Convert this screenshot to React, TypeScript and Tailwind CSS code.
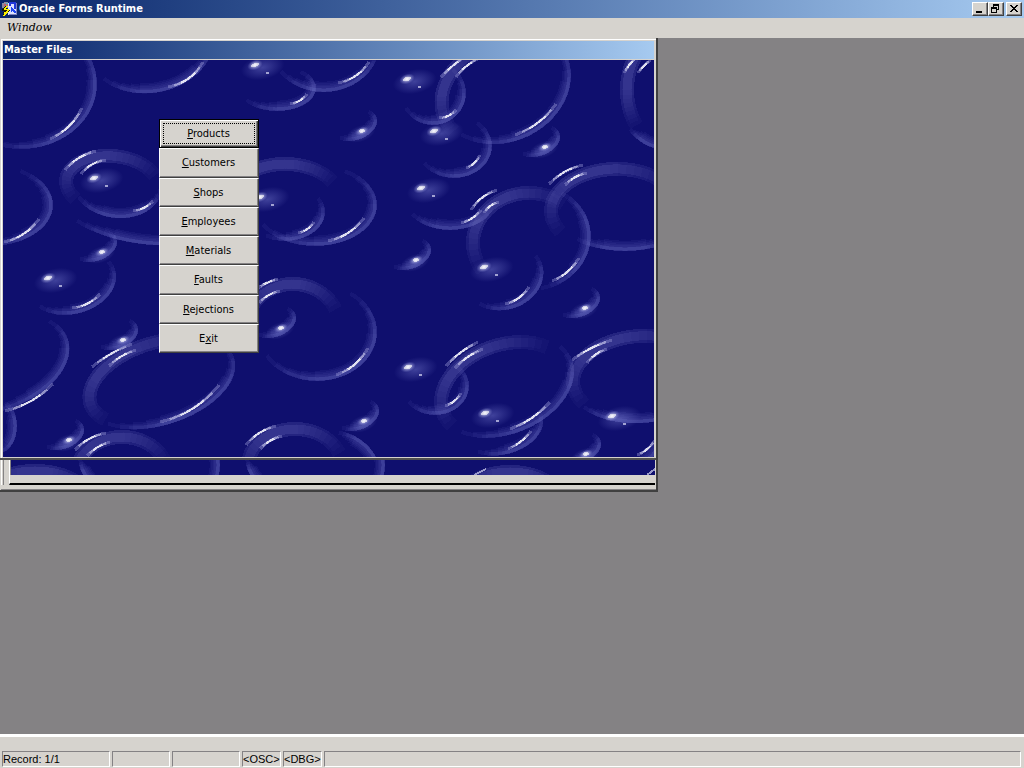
import { ReactNode } from "react";

type Arc = [cx: number, cy: number, rx: number, ry: number, rot: number, from: number, to: number];
type Streak = [x1: number, y1: number, x2: number, y2: number, bend: number];
type Point = [x: number, y: number];

// rims of the bubbles, angles in degrees, clockwise from the right
const arcs: Arc[] = [
  [21, 84, 76, 65, 0, -50, 115],
  [150, 42, 65, 51, -10, 10, 145],
  [277, 88, 39, 23, 0, -50, 145],
  [325, 45, 55, 47, -5, 10, 150],
  [117, 183, 46, 35, 8, 0, 145],
  [-10, 205, 63, 41, 0, -60, 100],
  [145, 190, 100, 54, 8, 40, 130],
  [315, 205, 62, 41, 0, -60, 150],
  [285, 212, 40, 29, 0, -30, 120],
  [72, 282, 45, 32, -15, -20, 150],
  [-8, 364, 80, 48, -18, -30, 110],
  [160, 382, 78, 43, -18, -20, 145],
  [-3, 426, 20, 28, 0, -60, 90],
  [317, 332, 60, 49, 0, -55, 150],
  [433, 93, 33, 32, 0, -50, 150],
  [503, 84, 70, 58, -25, -20, 150],
  [454, 146, 38, 32, 0, -50, 145],
  [450, 200, 45, 30, 0, 10, 150],
  [532, 238, 59, 53, -10, -50, 90],
  [625, 207, 76, 44, 0, 50, 130],
  [667, 95, 50, 55, 0, 85, 140],
  [503, 276, 41, 34, -15, -20, 140],
  [505, 386, 72, 48, -22, -20, 145],
  [435, 386, 34, 29, 0, -50, 145],
  [500, 425, 44, 30, -12, -10, 130],
  [642, 376, 76, 47, -5, 60, 145],
  [614, 432, 50, 40, 0, 5, 70],
  [330, 480, 52, 50, 0, -80, -10],
];

// lit upper left sides, drawn thicker than the rest of the rim
const wideArcs: Arc[] = [
  [112, 184, 53, 35, 5, 140, 335],
  [285, 200, 62, 43, 0, 190, 330],
  [158, 382, 78, 46, -18, 150, 320],
  [122, 475, 53, 45, 0, 155, 340],
  [295, 466, 54, 44, 0, 155, 340],
  [293, 328, 54, 51, 0, 180, 335],
  [505, 94, 72, 58, -20, 160, 275],
  [528, 242, 62, 56, -5, 150, 315],
  [614, 209, 70, 47, -3, 150, 335],
  [667, 90, 47, 62, 0, 140, 250],
  [505, 390, 73, 52, -20, 160, 325],
  [640, 378, 74, 49, -5, 150, 320],
];

const upperStreaks: Streak[] = [
  [65, 170, 96, 151, 3],
  [81, 174, 106, 160, 3],
  [92, 367, 132, 344, 2],
  [109, 366, 136, 350, 2],
  [75, 450, 106, 433, 3],
  [87, 456, 110, 442, 2],
  [246, 445, 276, 426, 3],
  [260, 449, 282, 436, 2],
  [258, 288, 278, 279, 1],
  [259, 303, 280, 291, 2],
  [441, 77, 466, 56, 1],
  [456, 77, 480, 58, 2],
  [471, 210, 497, 190, 3],
  [484, 213, 499, 202, 2],
  [549, 184, 583, 165, 3],
  [565, 185, 587, 173, 2],
  [624, 73, 637, 57, 1],
  [638, 73, 651, 60, 1],
  [446, 366, 478, 342, 2],
  [455, 368, 483, 349, 2],
  [572, 360, 612, 340, 2],
  [587, 363, 607, 349, 2],
];

const lowerStreaks: Streak[] = [
  [50, 139, 82, 108, -4],
  [168, 87, 203, 62, -5],
  [290, 104, 307, 94, -2],
  [338, 83, 369, 62, -4],
  [133, 211, 153, 201, -2],
  [4, 242, 39, 219, -4],
  [328, 241, 364, 218, -4],
  [298, 233, 314, 222, -2],
  [72, 308, 100, 294, -3],
  [5, 411, 53, 384, -4],
  [160, 422, 219, 385, -6],
  [336, 375, 368, 348, -4],
  [439, 118, 456, 110, -2],
  [515, 135, 556, 104, -4],
  [466, 168, 480, 155, -2],
  [461, 223, 481, 210, -2],
  [552, 281, 579, 258, -3],
  [505, 304, 529, 287, -3],
  [510, 429, 550, 402, -3],
  [445, 406, 461, 393, -2],
  [508, 449, 531, 431, -2],
  [637, 455, 655, 440, -2],
];

const glints: Point[] = [
  [255, 65], [94, 178], [260, 197], [48, 278], [407, 79], [434, 131],
  [421, 188], [484, 267], [408, 367], [485, 413], [612, 416],
];

const droplets: Point[] = [
  [102, 252], [362, 131], [545, 147], [416, 260], [585, 308], [364, 421],
  [281, 328], [123, 340], [69, 440], [586, 454],
];

const arcPath = ([cx, cy, rx, ry, rot, from, to]: Arc, inset: number, trim: number) => {
  const r = (rot * Math.PI) / 180;
  const steps = 28;
  const start = from + (to - from) * trim;
  const end = to - (to - from) * trim;
  let d = "";
  for (let i = 0; i <= steps; i++) {
    const t = ((start + ((end - start) * i) / steps) * Math.PI) / 180;
    const x = (rx - inset) * Math.cos(t);
    const y = (ry - inset) * Math.sin(t);
    const px = cx + x * Math.cos(r) - y * Math.sin(r);
    const py = cy + x * Math.sin(r) + y * Math.cos(r);
    d += `${i === 0 ? "M" : "L"}${px.toFixed(1)} ${py.toFixed(1)}`;
  }
  return d;
};

const streakPath = ([x1, y1, x2, y2, bend]: Streak, trim: number) => {
  const len = Math.hypot(x2 - x1, y2 - y1);
  const nx = ((y2 - y1) / len) * bend * 2;
  const ny = (-(x2 - x1) / len) * bend * 2;
  const at = (t: number) => {
    const bow = 2 * t * (1 - t);
    return `${(x1 + (x2 - x1) * t + nx * bow).toFixed(1)} ${(y1 + (y2 - y1) * t + ny * bow).toFixed(1)}`;
  };
  const points = [0, 0.17, 0.33, 0.5, 0.67, 0.83, 1].map((t) => at(trim + t * (1 - trim * 2)));
  return `M${points.join("L")}`;
};

const Rim = ({ arc }: { arc: Arc }) => (
  <g fill="none" stroke="#7074c8">
    {[0, 1, 2, 3, 4].map((k) => (
      <path key={k} d={arcPath(arc, 2 + k * 0.8, k * 0.07)} strokeWidth={4 + k * 1.6} opacity={0.09} />
    ))}
    <path d={arcPath(arc, 2, 0.12)} strokeWidth={3} opacity={0.11} />
    <path d={arcPath(arc, 2, 0.25)} strokeWidth={3} opacity={0.11} />
  </g>
);

const WideRim = ({ arc }: { arc: Arc }) => (
  <g fill="none" stroke="#7074c8">
    {[0, 1, 2, 3, 4, 5, 6, 7, 8, 9].map((k) => (
      <path key={k} d={arcPath(arc, 7, k * 0.04)} strokeWidth={k % 2 ? 9 : 14} opacity={0.05} />
    ))}
  </g>
);

const BubbleShapes = () => (
  <g>
    {arcs.map((arc, i) => (
      <Rim key={i} arc={arc} />
    ))}
    {wideArcs.map((arc, i) => (
      <WideRim key={i} arc={arc} />
    ))}
    {[...upperStreaks, ...lowerStreaks].map((s, i) => (
      <g key={i} fill="none">
        <path d={streakPath(s, 0)} stroke="#9a9cd8" strokeWidth={3} opacity={0.4} />
        <path d={streakPath(s, 0.14)} stroke="#d0d0ee" strokeWidth={2} opacity={0.55} />
        <path d={streakPath(s, 0.3)} stroke="#ffffff" strokeWidth={2} opacity={0.7} />
      </g>
    ))}
    {glints.map(([x, y]) => (
      <g key={`${x}-${y}`}>
        <ellipse cx={x + 7} cy={y + 4} rx={22} ry={12} fill="url(#glow)" transform={`rotate(-12 ${x} ${y})`} />
        <ellipse cx={x} cy={y} rx={8} ry={5} fill="url(#spark)" transform={`rotate(-20 ${x} ${y})`} />
        <ellipse cx={x} cy={y} rx={4} ry={2} fill="#fff" opacity={0.6} transform={`rotate(-20 ${x} ${y})`} />
        <rect x={x + 11} y={y + 7} width={3} height={2} fill="#d8d8f4" opacity={0.7} />
      </g>
    ))}
    {droplets.map(([x, y]) => (
      <g key={`${x}-${y}`}>
        <Rim arc={[x - 7, y - 6, 23, 15, -20, -35, 150]} />
        <ellipse cx={x - 2} cy={y + 2} rx={15} ry={8} fill="url(#glow)" transform={`rotate(-20 ${x} ${y})`} />
        <ellipse cx={x} cy={y} rx={7} ry={4} fill="url(#spark)" transform={`rotate(-20 ${x} ${y})`} />
        <ellipse cx={x} cy={y} rx={3} ry={2} fill="#fff" opacity={0.6} transform={`rotate(-20 ${x} ${y})`} />
      </g>
    ))}
  </g>
);

const Bubbles = () => (
  <svg
    aria-hidden="true"
    className="absolute inset-0 h-full w-full"
    viewBox="3 60 651 397"
    preserveAspectRatio="xMinYMin slice"
    shapeRendering="crispEdges"
  >
    <defs>
      <radialGradient id="glow">
        <stop offset="0" stopColor="#7074c8" stopOpacity="0.5" />
        <stop offset="1" stopColor="#7074c8" stopOpacity="0" />
      </radialGradient>
      <radialGradient id="spark">
        <stop offset="0" stopColor="#ffffff" />
        <stop offset="1" stopColor="#8084d8" stopOpacity="0" />
      </radialGradient>
    </defs>
    <BubbleShapes />
  </svg>
);

const BubbleStrip = () => (
  <svg
    aria-hidden="true"
    className="block h-full w-full"
    viewBox="11 460 644 15"
    preserveAspectRatio="xMinYMin slice"
    shapeRendering="crispEdges"
  >
    <WideRim arc={[35, 500, 60, 36, 0, 200, 340]} />
    <Rim arc={[165, 465, 55, 50, 0, -40, 40]} />
    <Rim arc={[330, 465, 55, 50, 0, -40, 40]} />
    <WideRim arc={[510, 505, 60, 40, 0, 200, 340]} />
    <Rim arc={[98, 455, 20, 30, 0, 90, 170]} />
    <Rim arc={[265, 455, 20, 30, 0, 90, 170]} />
    <path d="M474 475L486 469M647 475L655 469" fill="none" stroke="#d0d0ee" strokeWidth={2} opacity={0.7} />
  </svg>
);

const FormsIcon = () => (
  <svg aria-hidden="true" width="16" height="16" viewBox="0 0 16 16" shapeRendering="crispEdges">
    <path d="M0 2h2v-1h4v1h2v5h-8z" fill="#8c88a0" />
    <path d="M2 3h2v2h-2zM5 3h1v2h-1z" fill="#c86060" />
    <path d="M4 2h2v1h-2z" fill="#50b0c0" />
    <path d="M6 2h9v12h-9z" fill="#dce2ff" />
    <path d="M7 1h7v2h-7zM12 3h2v5h-2zM7 3h2v2h-2z" fill="#2038d8" />
    <path d="M9 6h1v5h-1zM10 7h1v1h1v1h1v1h1v2h-2v-1h-1v-1h-1z" fill="#2048f0" />
    <path d="M14 2h1v12h-1zM7 13h8v1h-8z" fill="#7c84c0" />
    <path d="M3 5h3v1h-1v2h2v1h1v1h-1v1h-1v1h-1v1h-1v1h-1v1h-2v-2h1v-1h-1v-1h1v-1h-2v-2h1v-1h1v-1h1z" fill="#181800" />
    <path d="M4 5h2v1h-2zM3 6h2v1h-2zM2 7h2v1h-2zM2 8h5v1h-5zM5 9h2v1h-2zM4 10h2v1h-2zM2 11h4v1h-4zM2 12h3v1h-3zM2 13h2v1h-2zM1 14h2v1h-2z" fill="#f8f000" />
  </svg>
);

const CaptionButton = ({ label, children }: { label: string; children: ReactNode }) => (
  <button
    type="button"
    aria-label={label}
    className="h-[14px] w-4 border border-t-white border-l-white border-r-[#404040] border-b-[#404040] bg-[#d6d3ce] shadow-[inset_-1px_-1px_0_#848284]"
  >
    <svg aria-hidden="true" width="14" height="12" viewBox="0 0 14 12" shapeRendering="crispEdges">
      {children}
    </svg>
  </button>
);

const menuItems: { before: string; key: string; after: string }[] = [
  { before: "", key: "P", after: "roducts" },
  { before: "", key: "C", after: "ustomers" },
  { before: "", key: "S", after: "hops" },
  { before: "", key: "E", after: "mployees" },
  { before: "", key: "M", after: "aterials" },
  { before: "", key: "F", after: "aults" },
  { before: "", key: "R", after: "ejections" },
  { before: "E", key: "x", after: "it" },
];

const MenuButton = ({ item, selected }: { item: (typeof menuItems)[number]; selected: boolean }) => (
  <button
    type="button"
    className={
      selected
        ? "relative flex-1 border border-black bg-[#d6d3ce] pt-px pr-px text-[11px] leading-3 shadow-[inset_1px_1px_0_#fff,inset_-1px_-1px_0_#404040,inset_-2px_-2px_0_#848284]"
        : "relative flex-1 border border-t-white border-l-white border-r-[#404040] border-b-[#404040] bg-[#d6d3ce] pt-px pr-px text-[11px] leading-3 shadow-[inset_-1px_-1px_0_#848284]"
    }
  >
    {selected && <span className="absolute inset-[3px] border border-dotted border-black" />}
    {item.before}
    <span className="underline underline-offset-1">{item.key}</span>
    {item.after}
  </button>
);

const StatusField = ({ className, children }: { className: string; children?: ReactNode }) => (
  <div
    className={`h-4 border border-t-[#848284] border-l-[#848284] border-r-white border-b-white text-[11px] leading-[14px] whitespace-nowrap ${className}`}
  >
    {children}
  </div>
);

const App = () => {
  return (
    <div className="flex min-h-screen flex-col bg-[#d6d3ce] font-['DejaVu_Sans_Condensed','DejaVu_Sans',sans-serif] text-black">
      <header className="flex h-[18px] items-center bg-linear-to-r from-[#0a246a] to-[#a6caf0] px-[2px]">
        <FormsIcon />
        <h1 className="ml-px flex-1 text-[11px] leading-[18px] font-bold text-white">Oracle Forms Runtime</h1>
        <CaptionButton label="Minimize">
          <path d="M3 8h6v2h-6z" />
        </CaptionButton>
        <CaptionButton label="Restore">
          <path d="M4 1h6v6h-2v-1h1v-3h-4v1h-1zM2 4h6v6h-6zM3 6v3h4v-3z" fillRule="evenodd" />
        </CaptionButton>
        <div className="w-[2px]" />
        <CaptionButton label="Close">
          <path d="M3 2h2v1h1v1h2v-1h1v-1h2v1h-1v1h-1v1h-1v1h1v1h1v1h1v1h-2v-1h-1v-1h-2v1h-1v1h-2v-1h1v-1h1v-1h1v-1h-1v-1h-1v-1h-1z" />
        </CaptionButton>
      </header>

      <nav className="flex h-5 items-center px-[7px]">
        <button type="button" className="pb-px font-['DejaVu_Serif',serif] text-[11px] leading-4 italic">
          Window
        </button>
      </nav>

      <main className="flex-1 bg-[#848284]">
        <div className="w-full max-w-[658px] border-r-2 border-b-2 border-r-[#404040] border-b-[#404040] bg-[#d6d3ce]">
          <section className="border-t border-l border-[#d6d3ce]">
            <div className="border-t border-l border-white pt-px pr-[2px] pb-px pl-px">
              <h2 className="mb-px bg-linear-to-r from-[#0a246a] to-[#a6caf0] pl-px text-[11px] leading-[18px] font-bold text-white">
                Master Files
              </h2>
              <div className="relative flex h-[397px] overflow-hidden bg-[#0f0f6e]">
                <Bubbles />
                <div className="relative mt-[59px] ml-[156px] flex h-[234px] w-[100px] flex-col">
                  {menuItems.map((item, i) => (
                    <MenuButton key={item.key} item={item} selected={i === 0} />
                  ))}
                </div>
              </div>
            </div>
          </section>

          {/* bottom of the canvas window lying behind */}
          <div className="border-t-2 border-t-[#505050] pl-px">
            <div className="flex border-l border-white pr-px pl-px">
              <div className="w-[6px] border-l border-[#848284]" />
              <div className="min-w-0 flex-1 border-b-2 border-l border-b-black border-l-white">
                <div className="h-[15px] border-l border-[#848284] bg-[#0f0f6e]">
                  <BubbleStrip />
                </div>
                <div className="h-2" />
              </div>
            </div>
            <div className="h-[5px] border-b border-[#848284]" />
          </div>
        </div>
      </main>

      <footer className="flex flex-col border-t-[3px] border-t-white pt-[14px] pb-px font-['Liberation_Sans',Arial,sans-serif]">
        <div className="flex gap-[2px] pr-[3px] pl-[2px]">
          <StatusField className="w-[108px]">Record: 1/1</StatusField>
          <StatusField className="w-[58px]" />
          <StatusField className="w-[68px]" />
          <StatusField className="w-[39px]">&lt;OSC&gt;</StatusField>
          <StatusField className="w-[39px]">&lt;DBG&gt;</StatusField>
          <StatusField className="flex-1" />
        </div>
      </footer>
    </div>
  );
};

export default App;
